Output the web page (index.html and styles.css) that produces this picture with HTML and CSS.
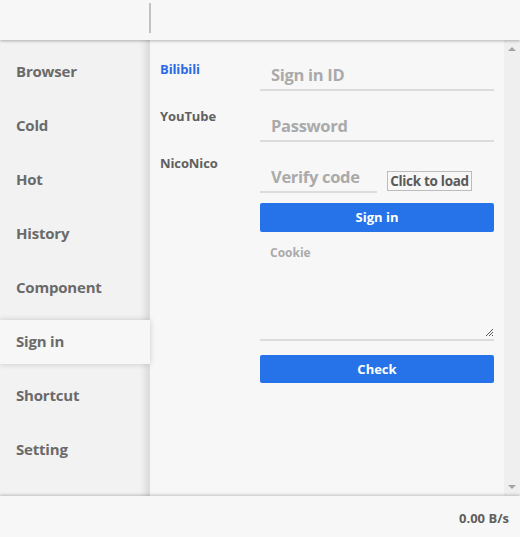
FILE: index.html
```html
<!DOCTYPE html>
<html>
<head>
<meta charset="utf-8">
<link rel="stylesheet" href="styles.css">
</head>
<body>
<div class="app">
  <header class="topbar">
    <div class="brand"></div>
    <div class="sep"></div>
  </header>
  <div class="main">
    <nav class="sidebar">
      <div class="nav-item">Browser</div>
      <div class="nav-item">Cold</div>
      <div class="nav-item">Hot</div>
      <div class="nav-item">History</div>
      <div class="nav-item">Component</div>
      <div class="nav-item active">Sign in</div>
      <div class="nav-item">Shortcut</div>
      <div class="nav-item">Setting</div>
    </nav>
    <section class="content">
      <div class="tabs">
        <div class="tab active">Bilibili</div>
        <div class="tab">YouTube</div>
        <div class="tab">NicoNico</div>
      </div>
      <div class="form">
        <div class="field"><span class="ph">Sign in ID</span></div>
        <div class="field"><span class="ph">Password</span></div>
        <div class="verify-row">
          <div class="field short"><span class="ph">Verify code</span></div>
          <div class="captcha">Click to load</div>
        </div>
        <div class="btn">Sign in</div>
        <div class="cookie">
          <span class="cookie-ph">Cookie</span>
          <svg class="grip" width="7" height="7" viewBox="0 0 7 7"><path d="M0 7L7 0M3 7L7 3M6 7L7 6" stroke="#555" stroke-width="1"/></svg>
        </div>
        <div class="btn check">Check</div>
      </div>
      <div class="scrollbar">
        <div class="arrow up"></div>
        <div class="arrow down"></div>
      </div>
    </section>
  </div>
  <footer class="footer">
    <span class="speed">0.00 B/s</span>
  </footer>
</div>
</body>
</html>
```
FILE: styles.css
```css
* { box-sizing: border-box; }
html, body { margin: 0; padding: 0; }
body {
  background: #f7f7f7;
  font-family: "Open Sans", "Noto Sans", "Liberation Sans", sans-serif;
  font-weight: 700;
  color: #686868;
}
.app { width: 520px; height: 537px; display: flex; flex-direction: column; overflow: hidden; }
.topbar {
  height: 40px;
  flex: none;
  display: flex;
  align-items: center;
  background: #f7f7f7;
  position: relative;
  z-index: 2;
  box-shadow: 0 1px 3px rgba(0,0,0,0.28);
}
.brand { width: 149px; }
.sep { width: 2px; height: 30px; background: #c2c2c2; margin-top: -4px; }
.main { flex: 1; display: flex; min-height: 0; }
.sidebar {
  width: 150px;
  flex: none;
  background: #f2f2f2;
  padding-top: 10px;
  border-right: 1px solid #dcdcdc;
  box-shadow: inset -8px 0 8px -6px rgba(0,0,0,0.14);
  position: relative;
  z-index: 1;
}
.nav-item {
  height: 44px;
  line-height: 43px;
  margin-bottom: 10px;
  padding-left: 16px;
  font-size: 15px;
  letter-spacing: -0.2px;
  color: #6a6a6a;
}
.nav-item.active {
  background: #f7f7f7;
  width: 150px;
  box-shadow: 0 0 6px rgba(0,0,0,0.18);
  position: relative;
}
.content { flex: 1; display: flex; background: #f7f7f7; }
.tabs { width: 110px; flex: none; padding-top: 19px; padding-left: 10px; }
.tab {
  height: 47px;
  line-height: 20px;
  font-size: 13px;
  color: #606060;
  letter-spacing: -0.1px;
}
.tab.active { color: #2a6ae6; }
.form { width: 234px; flex: none; padding-top: 21px; }
.field {
  height: 30px;
  border-bottom: 2px solid #dcdcdc;
  margin-bottom: 21px;
  padding-left: 11px;
  display: flex;
  align-items: center;
  padding-bottom: 1px;
}
.ph { font-size: 16.5px; color: #aaaaaa; letter-spacing: -0.3px; }
.verify-row { display: flex; align-items: flex-start; margin-bottom: 10px; }
.field.short { width: 117px; margin-bottom: 0; }
.captcha {
  margin-left: 10px;
  margin-top: 8px;
  width: 85px;
  height: 20px;
  border: 1px solid #bcbcbc;
  font-size: 13.5px;
  line-height: 18px;
  text-align: center;
  color: #5a5a5a;
  letter-spacing: -0.3px;
  white-space: nowrap;
}
.btn {
  height: 29px;
  background: #2673e9;
  border-radius: 2px;
  color: #fff;
  text-align: center;
  line-height: 29px;
  font-size: 13px;
}
.cookie {
  height: 98px;
  margin-top: 11px;
  border-bottom: 2px solid #dcdcdc;
  padding: 2px 10px;
  position: relative;
  font-size: 12px;
  line-height: 16px;
}
.cookie-ph { font-size: 12px; color: #aaaaaa; }
.grip { position: absolute; right: 1px; bottom: 3px; }
.btn.check { margin-top: 14px; height: 28px; line-height: 28px; }
.scrollbar {
  width: 16px;
  margin-left: auto;
  background: #efefef;
  display: flex;
  flex-direction: column;
  justify-content: space-between;
  align-items: center;
  padding: 7px 0 7px;
}
.arrow { width: 0; height: 0; border-left: 4px solid transparent; border-right: 4px solid transparent; }
.arrow.up { border-bottom: 4px solid #a3a3a3; }
.arrow.down { border-top: 4px solid #a3a3a3; }
.footer {
  height: 41px;
  flex: none;
  background: #f7f7f7;
  display: flex;
  align-items: center;
  justify-content: flex-end;
  padding-right: 11px;
  position: relative;
  z-index: 2;
  box-shadow: 0 -1px 3px rgba(0,0,0,0.22);
}
.speed { font-size: 13px; color: #5e5e5e; padding-top: 2px; }
```
